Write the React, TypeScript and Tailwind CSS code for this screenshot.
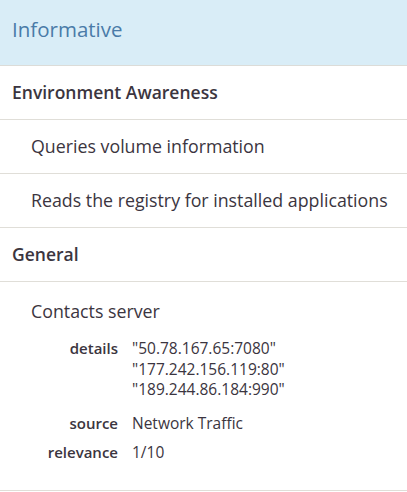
const font = { fontFamily: "'Open Sans', 'Noto Sans', sans-serif" };

function Row({ children, bold }: { children: React.ReactNode; bold?: boolean }) {
  return (
    <div
      className={
        "h-[54px] flex items-center border-b border-[#e0ded8] " +
        (bold ? "pl-3 font-semibold text-[17.5px]" : "pl-[31px] text-[17.8px]")
      }
    >
      {children}
    </div>
  );
}

const details = [
  { label: "details", values: ['"50.78.167.65:7080"', '"177.242.156.119:80"', '"189.244.86.184:990"'] },
  { label: "source", values: ["Network Traffic"] },
  { label: "relevance", values: ["1/10"] },
];

export default function App() {
  return (
    <div className="w-[407px] h-[492px] bg-white text-[#3b3540]" style={font}>
      <div className="h-[66px] bg-[#d9edf7] border-b border-[#dcdcd8] flex items-center pl-3 pb-[6px] text-[20.5px] text-[#4a7ba8]">
        Informative
      </div>
      <Row bold>Environment Awareness</Row>
      <Row>Queries volume information</Row>
      <Row>Reads the registry for installed applications</Row>
      <Row bold>General</Row>
      <div className="border-b border-[#e0ded8] pl-[31px] pt-[17px] pb-[27px]">
        <div className="text-[17.8px] leading-[24px]">Contacts server</div>
        <div className="mt-[15px] grid grid-cols-[87px_1fr] gap-x-[14px] gap-y-[9px] leading-[20.5px]">
          {details.map((d) => (
            <>
              <div key={d.label + "l"} className="text-right font-semibold text-[15px]">
                {d.label}
              </div>
              <div key={d.label + "v"} className={"text-[15.5px] " + (d.values.length > 1 ? "pb-[4px]" : "")}>
                {d.values.map((v) => (
                  <div key={v}>{v}</div>
                ))}
              </div>
            </>
          ))}
        </div>
      </div>
    </div>
  );
}
